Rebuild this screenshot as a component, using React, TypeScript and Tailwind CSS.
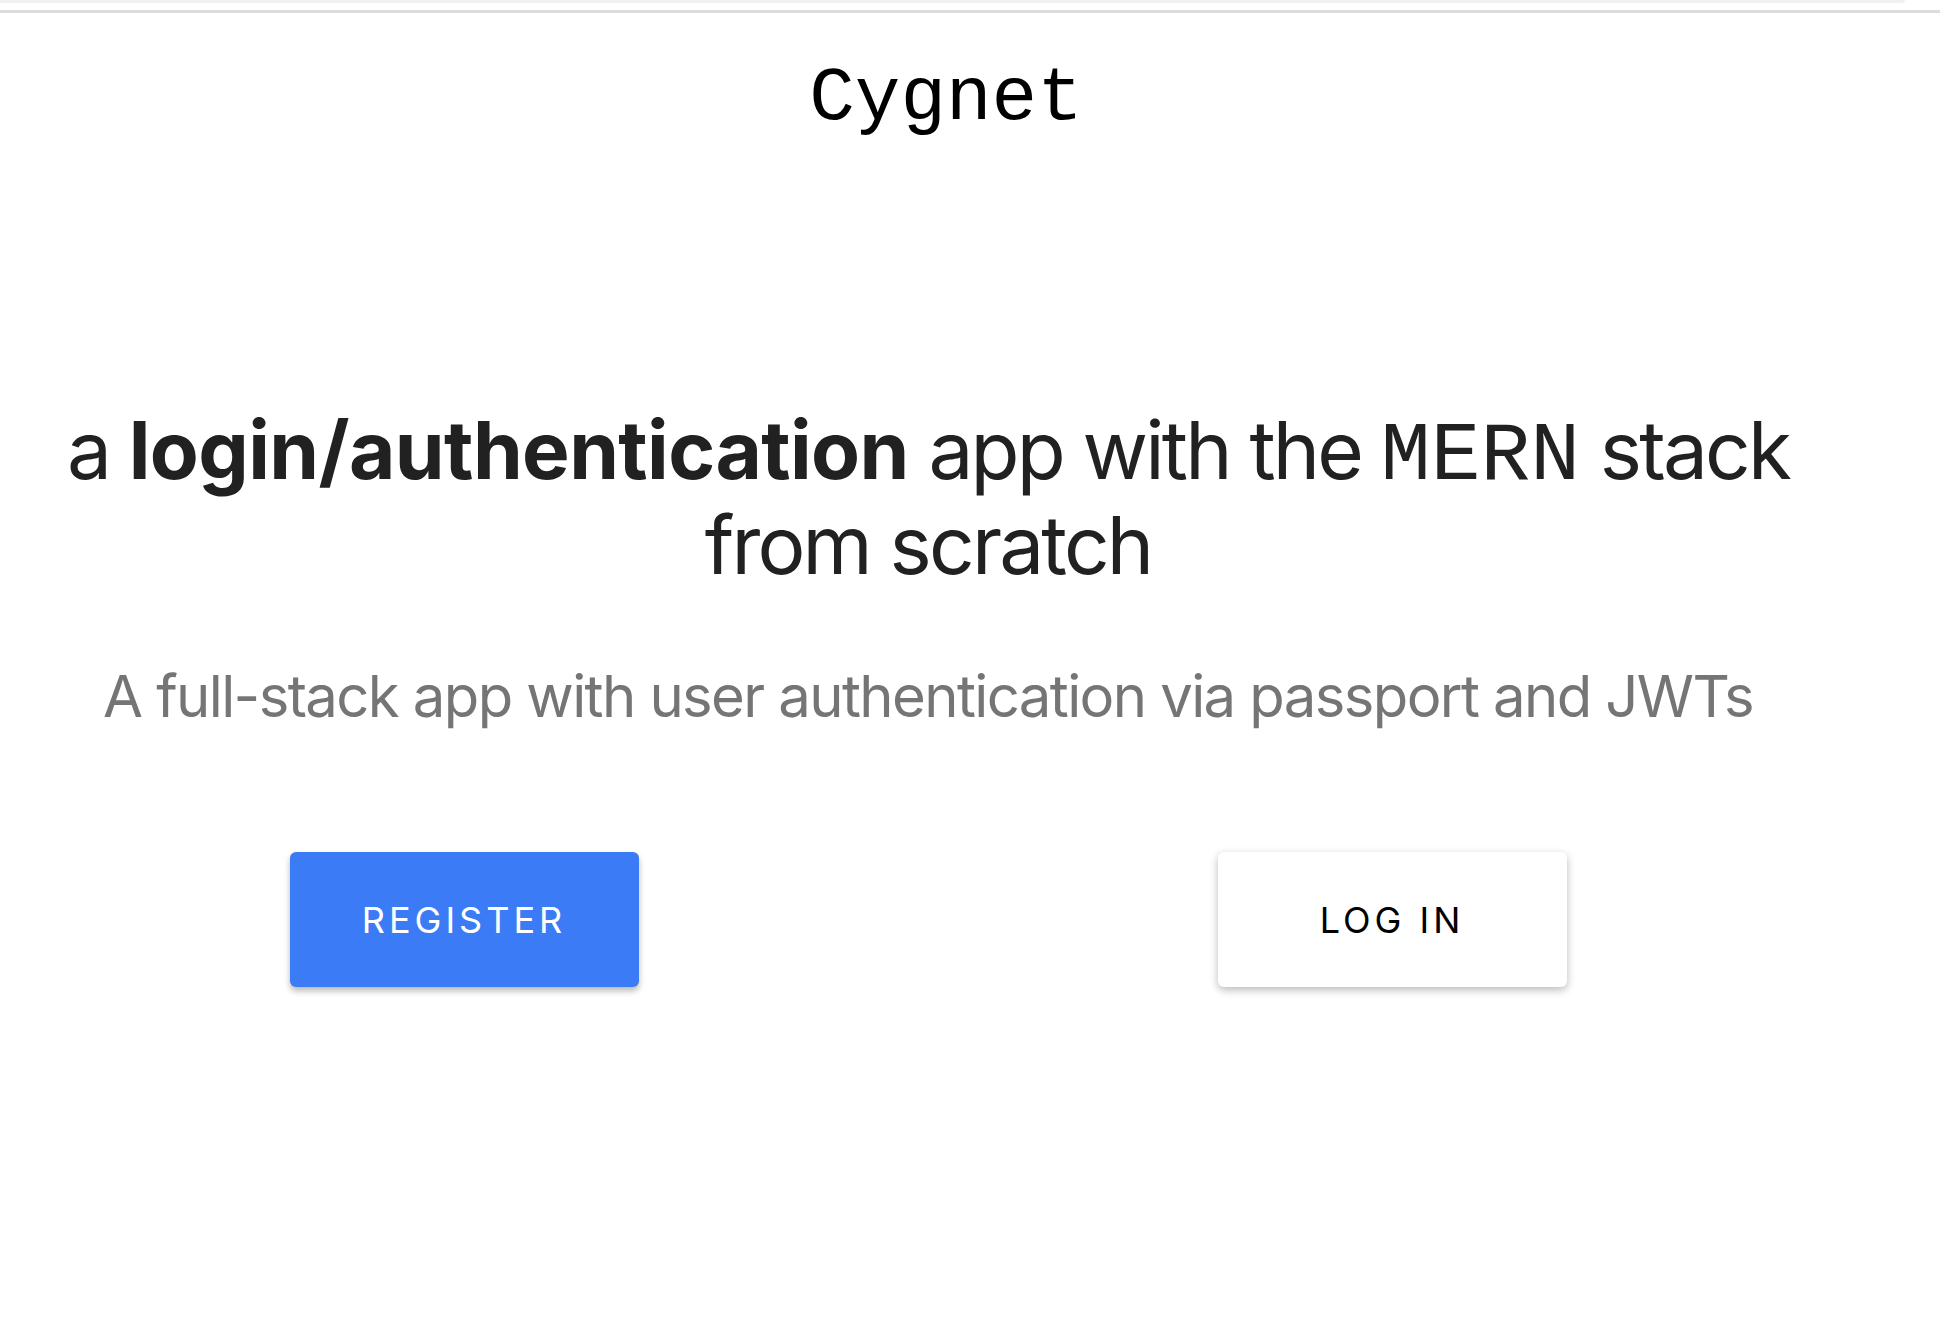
import React from 'react';

const mono = '"Courier New", Courier, "Nimbus Mono PS", FreeMono, "Liberation Mono", monospace';

const App: React.FC = () => {
  return (
    <div className="min-h-[1334px] w-[1940px] bg-white" style={{ fontFamily: 'Inter, "Noto Sans", sans-serif' }}>
      {/* browser-ish top strip */}
      <div className="h-[3px] w-[1905px] rounded-br-full bg-[#f1f1f2]"></div>
      <div className="mt-[7px] h-[3px] w-full bg-[#dcdce0]"></div>

      <nav className="w-[1892px] pt-[48px] text-center">
        <span className="text-[76px] leading-none text-black" style={{ fontFamily: mono }}>
          Cygnet
        </span>
      </nav>

      <div className="w-[1856px] pt-[269px]">
        <h1 className="text-center text-[80px] leading-[88px] tracking-[-2.8px] text-[#212121]">
          a <b className="font-bold tracking-[-0.6px]">login/authentication</b> app with the{' '}
          <span className="text-[83px] tracking-[0px]" style={{ fontFamily: mono }}>MERN</span> stack
          <br />
          from scratch
        </h1>

        <p className="mt-[72px] text-center text-[58px] leading-[70px] tracking-[-1.6px] text-[#757575]">
          A full-stack app with user authentication via passport and JWTs
        </p>

        <div className="mt-[121px] grid grid-cols-2">
          <div className="flex justify-center">
            <button className="h-[135px] w-[349px] rounded-[6px] bg-[#3b7cf6] text-[36px] tracking-[4px] text-white shadow-[0_4px_6px_rgba(0,0,0,0.28)]">
              REGISTER
            </button>
          </div>
          <div className="flex justify-center">
            <button className="h-[135px] w-[349px] rounded-[6px] bg-white text-[36px] tracking-[4px] text-black shadow-[0_3px_8px_rgba(0,0,0,0.28)]">
              LOG IN
            </button>
          </div>
        </div>
      </div>
    </div>
  );
};

export default App;
